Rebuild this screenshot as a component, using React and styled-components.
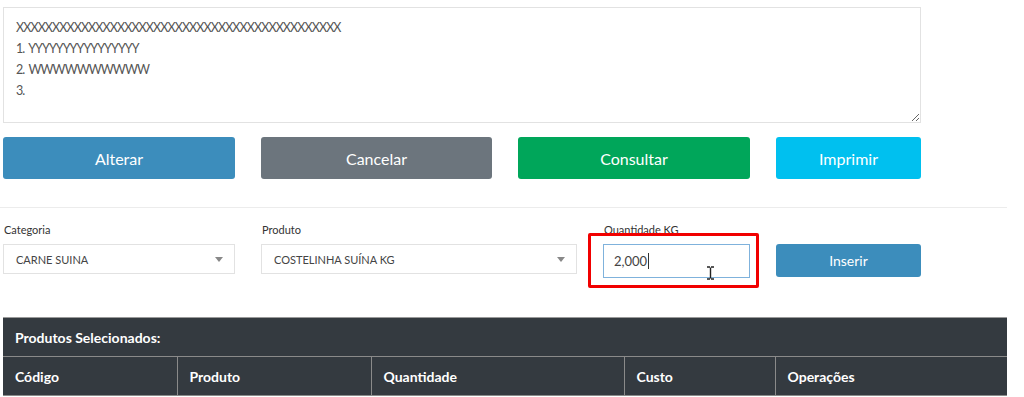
import React from "react";
import styled, { createGlobalStyle } from "styled-components";

const GlobalStyle = createGlobalStyle`
  body {
    margin: 0;
    background: #fff;
    font-family: Lato, "Open Sans", sans-serif;
    color: #333;
  }
`;

const Page = styled.div`
  width: 1007px;
  padding-top: 7px;
`;

const Notes = styled.textarea`
  display: block;
  margin-left: 3px;
  width: 918px;
  height: 116px;
  box-sizing: border-box;
  border: 1px solid #e2e2e2;
  padding: 9px 12px;
  font-family: Lato, "Open Sans", sans-serif;
  font-size: 12.5px;
  letter-spacing: -0.9px;
  word-spacing: 2px;
  line-height: 21px;
  color: #555;
  resize: vertical;
  outline: none;
`;

const ButtonRow = styled.div`
  display: flex;
  gap: 26px;
  margin: 14px 0 0 3px;
`;

const Button = styled.button`
  width: ${p => p.$w}px;
  height: ${p => p.$h || 42}px;
  border: none;
  border-radius: 3px;
  background: ${p => p.$bg};
  color: #fff;
  font-family: Lato, "Open Sans", sans-serif;
  font-size: ${p => p.$fs || 16}px;
  padding: 0;
`;

const Rule = styled.hr`
  margin: 28px 0 0 0;
  border: none;
  border-top: 1px solid #ececec;
  width: 1007px;
`;

const FieldRow = styled.div`
  display: flex;
  align-items: flex-start;
  gap: 26px;
  margin: 15px 0 0 3px;
`;

const Field = styled.div`
  position: relative;
  display: flex;
  flex-direction: column;
  width: ${p => p.$w}px;
`;

const Label = styled.label`
  font-size: 11px;
  color: #333;
  padding-left: 1px;
  margin-bottom: 8px;
  line-height: 13px;
`;

const ActionCell = styled.div`
  padding-top: 21px;
`;

const Select = styled.div`
  display: flex;
  align-items: center;
  justify-content: space-between;
  height: 30px;
  box-sizing: border-box;
  border: 1px solid #e2e2e2;
  padding: 0 11px 0 12px;
  font-size: 11px;
  color: #444;
`;

const Caret = styled.span`
  width: 0;
  height: 0;
  border-left: 4px solid transparent;
  border-right: 4px solid transparent;
  border-top: 5px solid #888;
`;

const Input = styled.div`
  display: flex;
  align-items: center;
  height: 34px;
  box-sizing: border-box;
  border: 1px solid #7fb2dc;
  padding: 0 10px;
  font-size: 13px;
  color: #444;
`;

const TextCaret = styled.span`
  display: inline-block;
  width: 1px;
  height: 16px;
  background: #333;
  margin-left: 1px;
`;

const Highlight = styled.div`
  position: absolute;
  left: -15px;
  top: 10px;
  width: 171px;
  height: 55px;
  box-sizing: border-box;
  border: 3px solid #f10000;
  border-radius: 2px;
  pointer-events: none;
`;

const Pointer = styled.svg`
  position: absolute;
  left: 103px;
  top: 43px;
`;

const Table = styled.table`
  margin: 39px 0 0 3px;
  width: 1004px;
  border-collapse: collapse;
  background: #343a40;
  color: #fff;
  font-size: 14px;
  font-weight: 700;
  table-layout: fixed;
  border-top: 1px solid #9a9a9a;

  th {
    text-align: left;
    padding: 0 12px;
    height: 38px;
    border: 1px solid #8a8a8a;
    border-top: none;
  }
  tr:first-child th {
    border-left: none;
    border-right: none;
  }
  tr th:first-child {
    border-left: none;
  }
  tr th:last-child {
    border-right: none;
  }
`;

const columns = [
  ["Código", 174],
  ["Produto", 194],
  ["Quantidade", 253],
  ["Custo", 151],
  ["Operações", 232],
];

const noteText = [
  "XXXXXXXXXXXXXXXXXXXXXXXXXXXXXXXXXXXXXXXXXXXXX",
  "1. YYYYYYYYYYYYYYYY",
  "2. WWWWWWWWWW",
  "3. ",
].join("\n");

export default function App() {
  return (
    <Page>
      <GlobalStyle />
      <Notes defaultValue={noteText} readOnly />

      <ButtonRow>
        <Button $w={232} $bg="#3c8dbc">Alterar</Button>
        <Button $w={231} $bg="#6c757d">Cancelar</Button>
        <Button $w={232} $bg="#00a65a">Consultar</Button>
        <Button $w={145} $bg="#00c0ef">Imprimir</Button>
      </ButtonRow>

      <Rule />

      <FieldRow>
        <Field $w={232}>
          <Label>Categoria</Label>
          <Select>
            CARNE SUINA
            <Caret />
          </Select>
        </Field>
        <Field $w={316}>
          <Label>Produto</Label>
          <Select>
            COSTELINHA SUÍNA KG
            <Caret />
          </Select>
        </Field>
        <Field $w={147}>
          <Label>Quantidade KG</Label>
          <Input>
            2,000
            <TextCaret />
          </Input>
          <Highlight />
          <Pointer width="9" height="14" viewBox="0 0 9 14">
            <path
              d="M1 1h3M5 1h3M4.5 1.5v11M1 13h3M5 13h3"
              stroke="#222"
              strokeWidth="1.4"
              fill="none"
            />
          </Pointer>
        </Field>
        <ActionCell>
          <Button $w={145} $h={33} $fs={14} $bg="#3c8dbc">
            Inserir
          </Button>
        </ActionCell>
      </FieldRow>

      <Table>
        <colgroup>
          {columns.map(([name, w]) => (
            <col key={name} style={{ width: w }} />
          ))}
        </colgroup>
        <thead>
          <tr>
            <th colSpan={5}>Produtos Selecionados:</th>
          </tr>
          <tr>
            {columns.map(([name]) => (
              <th key={name}>{name}</th>
            ))}
          </tr>
        </thead>
      </Table>
    </Page>
  );
}
